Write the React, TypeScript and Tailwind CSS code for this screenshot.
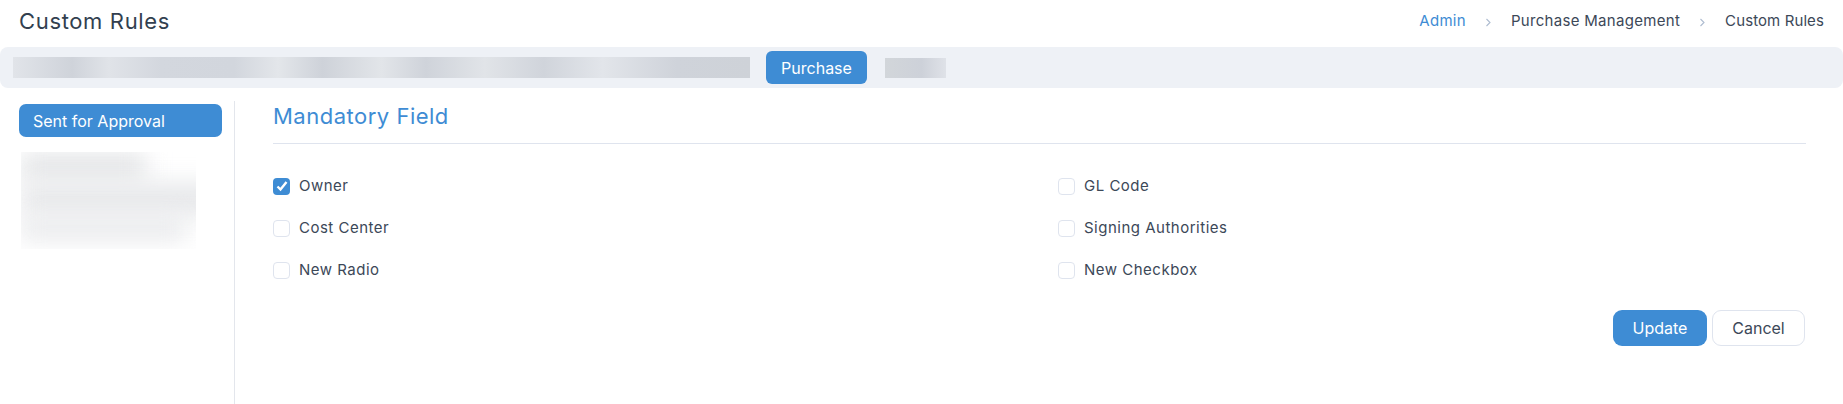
const leftFields = ['Owner', 'Cost Center', 'New Radio']
const rightFields = ['GL Code', 'Signing Authorities', 'New Checkbox']

function Chevron() {
    return (
        <svg className="w-[7px] h-[9px] text-[#aebcd0]" viewBox="0 0 7 9" fill="none" stroke="currentColor" strokeWidth={1.1}>
            <path d="M1.5 1l3.5 3.5L1.5 8" />
        </svg>
    )
}

function FieldCheck({ label, checked }: { label: string; checked?: boolean }) {
    return (
        <label className="h-[42px] flex items-center gap-[9px] text-[15px] tracking-[0.5px] text-[#3c4858]">
            {checked ? (
                <span className="w-[17px] h-[17px] rounded-[4px] bg-[#3e8cd4] flex items-center justify-center">
                    <svg className="w-[14px] h-[14px] text-white" viewBox="0 0 14 14" fill="none" stroke="currentColor" strokeWidth={2.4}>
                        <path d="M2.5 7.5l3 3 6-7.5" />
                    </svg>
                </span>
            ) : (
                <span className="w-[17px] h-[17px] rounded-[4px] bg-white border border-[#dfe4ee]" />
            )}
            {label}
        </label>
    )
}

export default function App() {
    return (
        <div className="w-[1843px] h-[404px] bg-white overflow-hidden font-['Inter',sans-serif]">
            <header className="h-[47px] pl-[19px] pr-[19px] pb-[5px] flex items-center justify-between">
                <h1 className="text-[22px] tracking-[0.65px] text-[#323f4f]">Custom Rules</h1>
                <nav className="flex items-center text-[15px] tracking-[0.3px] text-[#3c4858]">
                    <span className="text-[#3e8cd4]">Admin</span>
                    <span className="mx-[19px] mt-[3px]"><Chevron /></span>
                    <span>Purchase Management</span>
                    <span className="mx-[19px] mt-[3px]"><Chevron /></span>
                    <span className="tracking-[0.1px]">Custom Rules</span>
                </nav>
            </header>

            <div className="h-[41px] rounded-[8px] bg-[#eef1f6] pl-[13px] flex items-center">
                <div className="w-[737px] h-[21px] bg-[linear-gradient(90deg,#e1e4e9_0%,#cfd3da_8%,#e0e3e8_13%,#d3d7de_20%,#d2d6dd_30%,#e3e6ea_36%,#ced2d9_42%,#e2e5e9_50%,#cfd3da_56%,#e1e4e8_64%,#d0d4db_72%,#e2e5ea_80%,#cfd3da_90%,#ced2d8_100%)]" />
                <button className="ml-[16px] w-[101px] h-[33px] rounded-[6px] bg-[#3e8cd4] text-white text-[16px]">Purchase</button>
                <div className="ml-[18px] w-[61px] h-[20px] mt-[1px] bg-[linear-gradient(90deg,#d2d6da_0%,#cdd1d9_60%,#dfe2e8_100%)]" />
            </div>

            <div className="flex">
                <aside className="w-[235px] h-[316px] mt-[13px] pl-[19px] border-r border-[#e3e6ec]">
                    <button className="w-[203px] h-[33px] mt-[3px] pl-[14px] pt-[1px] rounded-[7px] bg-[#3e8cd4] text-left text-white text-[16px]">Sent for Approval</button>
                    <div className="w-[175px] h-[97px] mt-[15px] ml-[2px] overflow-hidden flex flex-col">
                        <div className="w-[125px] h-[30px] shrink-0 bg-[#e6e7e9] blur-[11px]" />
                        <div className="w-[200px] h-[34px] shrink-0 bg-[#e8e9eb] blur-[11px]" />
                        <div className="w-[165px] h-[25px] shrink-0 bg-[#eaebed] blur-[11px]" />
                    </div>
                </aside>

                <main className="w-[1571px] pl-[38px] pt-[13px]">
                    <h2 className="h-[43px] leading-[30px] border-b border-[#dfe4ee] text-[22px] tracking-[0.5px] text-[#3e8cd4]">Mandatory Field</h2>
                    <div className="mt-[21px] grid grid-cols-[785px_1fr]">
                        <div className="flex flex-col">
                            {leftFields.map((f, i) => <FieldCheck key={f} label={f} checked={i === 0} />)}
                        </div>
                        <div className="flex flex-col">
                            {rightFields.map(f => <FieldCheck key={f} label={f} />)}
                        </div>
                    </div>
                    <div className="mt-[19px] mr-[1px] flex justify-end gap-[5px]">
                        <button className="w-[94px] h-[36px] rounded-[9px] bg-[#3e8cd4] text-white text-[16px]">Update</button>
                        <button className="w-[93px] h-[36px] rounded-[9px] border border-[#dfe4ee] bg-white text-[16px] text-[#3c4858]">Cancel</button>
                    </div>
                </main>
            </div>
        </div>
    )
}
